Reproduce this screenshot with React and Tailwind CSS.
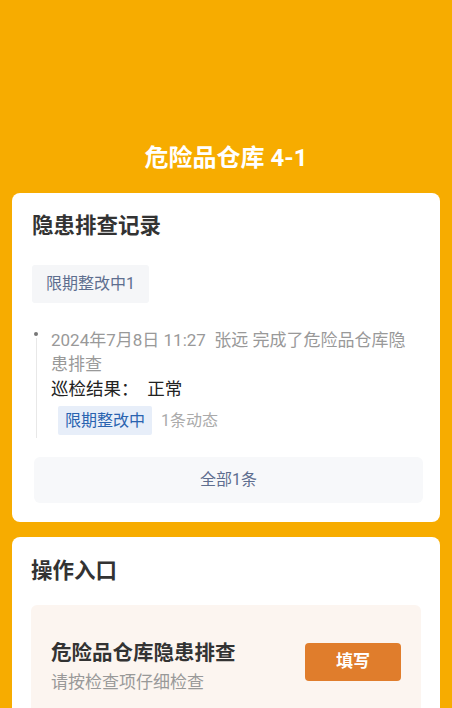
export default function App() {
  const font = { fontFamily: 'Roboto, "Noto Sans CJK SC", "Noto Sans", sans-serif' };
  return (
    <div className="w-[452px] h-[708px] overflow-hidden bg-[#f7ac00]" style={font}>
      <div className="h-[193px] flex items-end justify-center pb-[19px]">
        <div className="text-white font-bold text-[24px] leading-[32px]">危险品仓库 4-1</div>
      </div>
      <div className="px-[12px] flex flex-col gap-[15px]">
        <div className="bg-white rounded-[8px] pl-[20px] pr-[17px] pt-[17px] pb-[19px]">
          <div className="text-[21.5px] font-bold text-[#333] leading-[32px]">隐患排查记录</div>
          <div className="mt-[23px] flex">
            <div className="h-[38px] px-[14px] flex items-center bg-[#f5f6f8] rounded-[3px] text-[16px] text-[#5e6e8f]">限期整改中1</div>
          </div>
          <div className="mt-[25px] ml-[1px] relative pl-[18px] pr-[10px]">
            <div className="absolute left-[1px] top-[4px] w-[4px] h-[4px] rounded-full bg-[#777]"></div>
            <div className="absolute left-[2.5px] top-[10px] bottom-0 w-px bg-[#e8e8e8]"></div>
            <div className="text-[17px] leading-[24px] text-[#999]">2024年7月8日 11:27&nbsp; 张远 完成了危险品仓库隐患排查</div>
            <div className="text-[17.5px] leading-[24px] text-[#222] mt-[1px]">巡检结果：&nbsp; 正常</div>
            <div className="flex items-center mt-[5px] ml-[7px] pb-[3px]">
              <div className="h-[29px] px-[7px] flex items-center bg-[#e7eef9] rounded-[2px] text-[16px] text-[#2a63b0]">限期整改中</div>
              <div className="ml-[9px] text-[16px] text-[#aaa]">1条动态</div>
            </div>
          </div>
          <div className="mt-[19px] ml-[2px] h-[46px] rounded-[6px] bg-[#f7f8fa] flex items-center justify-center text-[16px] text-[#5e6e8f]">全部1条</div>
        </div>
        <div className="bg-white rounded-t-[8px] pl-[19px] pr-[19px] pt-[18px] h-[200px]">
          <div className="text-[21.5px] font-bold text-[#333] leading-[32px]">操作入口</div>
          <div className="mt-[18px] bg-[#fcf5f0] rounded-[6px] pl-[20px] pr-[20px] pt-[34px] pb-[30px] flex items-center justify-between">
            <div>
              <div className="text-[20.5px] font-bold text-[#333] leading-[28px]">危险品仓库隐患排查</div>
              <div className="text-[17px] text-[#999] leading-[26px] mt-[2px]">请按检查项仔细检查</div>
            </div>
            <div className="w-[96px] h-[38px] rounded-[4px] bg-[#e07d2c] text-white font-bold text-[17px] flex items-center justify-center -mt-[10px]">填写</div>
          </div>
        </div>
      </div>
    </div>
  );
}
